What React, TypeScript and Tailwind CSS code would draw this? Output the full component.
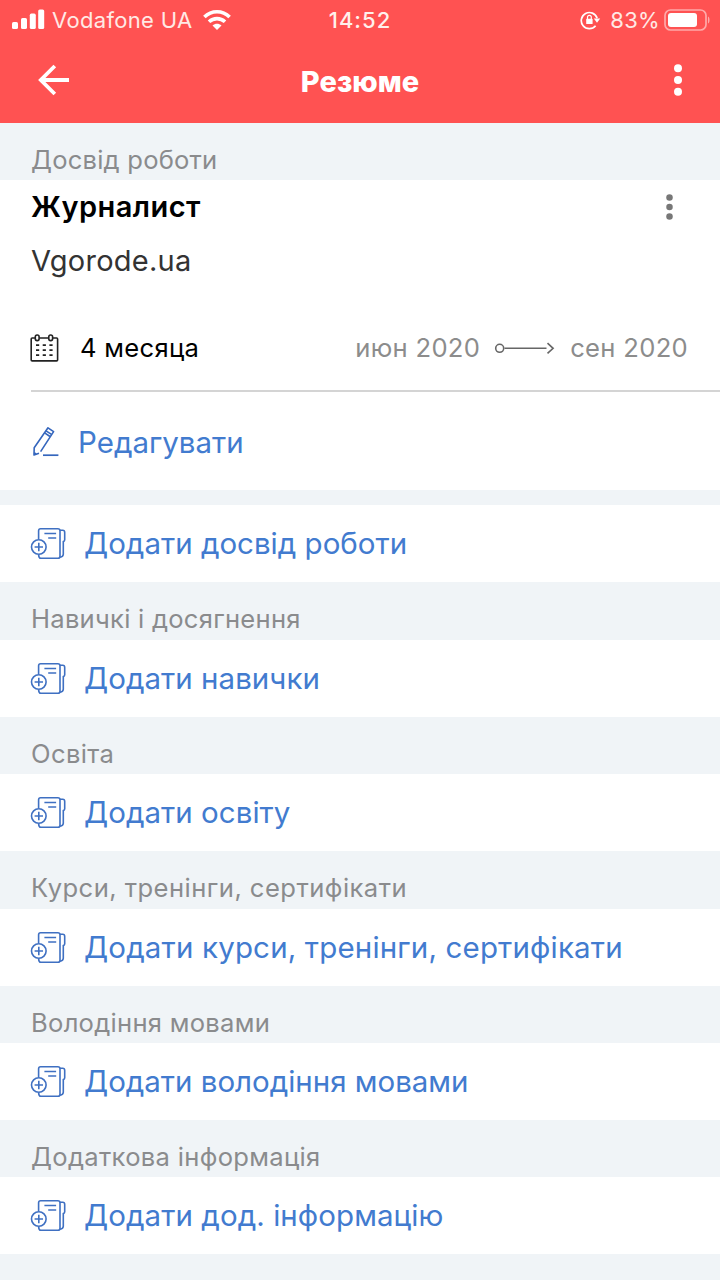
import { clsx } from "clsx";

const sections = [
  { title: "Навичкі і досягнення", action: "Додати навички", titleStyle: "tracking-[0.25px]", actionStyle: "tracking-[0.03px]" },
  { title: "Освіта", action: "Додати освіту", titleStyle: "tracking-[0.35px]", actionStyle: "tracking-[0.03px]" },
  { title: "Курси, тренінги, сертифікати", action: "Додати курси, тренінги, сертифікати", titleStyle: "tracking-[0.45px]", actionStyle: "tracking-[0.16px]" },
  { title: "Володіння мовами", action: "Додати володіння мовами", titleStyle: "tracking-[0.27px]", actionStyle: "tracking-[-0.02px]" },
  { title: "Додаткова інформація", action: "Додати дод. інформацію", titleStyle: "tracking-[0.3px]", actionStyle: "tracking-[0.06px]" },
];

function SignalIcon() {
  return (
    <svg width="33" height="22" viewBox="0 0 33 22" fill="#fff">
      <rect x="0" y="13" width="6" height="7" rx="1.6" />
      <rect x="9" y="9" width="6" height="11" rx="1.6" />
      <rect x="17.8" y="4.6" width="6" height="15.4" rx="1.6" />
      <rect x="26.2" y="0.5" width="6" height="19.5" rx="1.6" />
    </svg>
  );
}

function WifiIcon() {
  return (
    <svg width="28" height="22" viewBox="0 0 28 22" fill="none" stroke="#fff" strokeWidth="3.6">
      <path d="M1.4 8.1C8.5 0.9 19.5 0.9 26.6 8.1" />
      <path d="M6 12.8c4.6-4.3 11.4-4.3 16 0" />
      <path d="M9.5 16.5c2.7-2.3 6.3-2.3 9 0L14 21z" fill="#fff" stroke="none" />
    </svg>
  );
}

function RotationLockIcon() {
  return (
    <svg width="21" height="20" viewBox="0 0 21 20" fill="none" stroke="#fff" strokeWidth="1.7">
      <path d="M15.6 15.8A8.1 8.1 0 1 1 17.1 8.2" />
      <path d="M13.8 8.5h6.4L17 12.8z" fill="#fff" stroke="none" />
      <rect x="6.2" y="8.8" width="6.4" height="5.2" rx="0.6" fill="#fff" stroke="none" />
      <path d="M7.5 9V7.2a1.9 1.9 0 0 1 3.8 0V9" strokeWidth="1.2" />
    </svg>
  );
}

function BatteryIcon() {
  return (
    <svg width="46" height="22" viewBox="0 0 46 22">
      <rect x="1" y="1" width="41" height="20" rx="5.5" fill="none" stroke="#fff" strokeOpacity="0.5" strokeWidth="1.7" />
      <rect x="4" y="4" width="29" height="14" rx="3" fill="#fff" />
      <path d="M44 7.5c2 .8 2 6.2 0 7z" fill="#fff" fillOpacity="0.5" />
    </svg>
  );
}

function BackIcon() {
  return (
    <svg width="32" height="32" viewBox="0 0 32 32" fill="none" stroke="#fff" strokeWidth="3.8">
      <path d="M31 16H3M16.8 2L2.8 16l14 14" />
    </svg>
  );
}

function DotsIcon({ className }: { className?: string }) {
  return (
    <svg viewBox="0 0 8 32" fill="currentColor" className={className}>
      <circle cx="4" cy="4.2" r="4" />
      <circle cx="4" cy="16" r="4" />
      <circle cx="4" cy="27.8" r="4" />
    </svg>
  );
}

function CalendarIcon() {
  return (
    <svg width="29" height="29" viewBox="0 0 29 29" fill="none" stroke="#222" strokeWidth="1.6">
      <path d="M5 4H2.2Q1.2 4 1.2 5v20.9q0 1 1 1h24.4q1 0 1-1V5q0-1-1-1H23M9.3 4h9.2" />
      <rect x="5.3" y="1" width="3.8" height="5.6" rx="1.8" />
      <rect x="18.8" y="1" width="3.8" height="5.6" rx="1.8" />
      <path d="M6 11.2h17M6 16.2h17M6 21.2h17" strokeWidth="1.8" strokeDasharray="3.2 3.5" />
    </svg>
  );
}

function PeriodArrow() {
  return (
    <svg width="62" height="14" viewBox="0 0 62 14" fill="none" stroke="#666" strokeWidth="1.6">
      <circle cx="5.7" cy="7.3" r="4" />
      <path d="M10.5 7.3h42M53.5 2.2l5.6 5.1-5.6 5.1" />
    </svg>
  );
}

function PencilIcon() {
  return (
    <svg width="28" height="32" viewBox="0 0 28 32" fill="none" stroke="#3566bd" strokeWidth="1.6" strokeLinejoin="round">
      <path d="M7 27.2L2 29l.2-7.2L16 1.8l5.6 3.8L8.6 25.6" />
      <path d="M14 4.8l5.5 3.6M12.6 6.9l5.4 3.6M2.2 26.6l1.8 1.6" />
      <path d="M11 29.2h15.4" strokeWidth="1.7" />
    </svg>
  );
}

function AddDocIcon() {
  return (
    <svg width="36" height="33" viewBox="0 0 36 33" fill="none" stroke="#3f70c2" strokeWidth="1.6">
      <path d="M8.6 12V3.8Q8.6 1.7 10.6 1.7h17.2q2.2 0 2.2 2.1v25.4q0 2.1-2.2 2.1H10.8Q8.8 31.3 8.6 27.6" />
      <path d="M30 3.3h2.8q1.9 0 1.9 2.2v7.3q0 1.4-1.4 1.8v12.6q0 2.3-3.3 3" />
      <path d="M14.4 6.5h11.7M18.2 11h8" />
      <circle cx="8.8" cy="20" r="7.3" fill="#fff" />
      <path d="M4.6 20H13M8.8 15.8v8.4" />
    </svg>
  );
}

function SectionTitle({ children, className }: { children: string; className?: string }) {
  return (
    <div className="flex h-[57.4px] shrink-0 items-end pb-[4.5px] pl-[31px]">
      <h2 className={clsx("whitespace-nowrap text-[25.6px] leading-[32px] text-[#8a8b8d]", className)}>{children}</h2>
    </div>
  );
}

function AddRow({ children, className }: { children: string; className?: string }) {
  return (
    <button className="flex h-[77px] w-full shrink-0 items-center bg-white pl-[30px] text-left">
      <AddDocIcon />
      <span className={clsx("-mt-px ml-[18px] whitespace-nowrap text-[29.5px] leading-[36px] text-[#427bcf]", className)}>{children}</span>
    </button>
  );
}

export default function App() {
  return (
    <main className="flex h-[1280px] w-[720px] flex-col overflow-hidden bg-[#f0f4f7] font-['Inter',sans-serif]">
      <header className="h-[123px] shrink-0 bg-[#ff5252] text-white">
        <div className="grid h-[40px] grid-cols-3 items-center">
          <div className="flex items-center pl-3">
            <SignalIcon />
            <span className="ml-[7px] mr-[10px] whitespace-nowrap text-[22px] leading-7 tracking-[0.33px] text-[#ffe9e5]">Vodafone UA</span>
            <WifiIcon />
          </div>
          <span className="text-center text-[22px] font-medium leading-7 tracking-[1px] text-[#fff0ec]">14:52</span>
          <div className="flex items-center justify-end pr-[10px]">
            <RotationLockIcon />
            <span className="ml-[9px] mr-[4px] text-[22px] leading-7 tracking-[0.3px] text-[#ffe9e5]">83%</span>
            <BatteryIcon />
          </div>
        </div>
        <div className="grid h-[80px] grid-cols-[1fr_auto_1fr] items-center px-[38px]">
          <BackIcon />
          <h1 className="pt-[3px] text-[29px] font-extrabold leading-9">Резюме</h1>
          <DotsIcon className="h-8 w-2 justify-self-end" />
        </div>
      </header>

      <SectionTitle className="tracking-[0.2px]">Досвід роботи</SectionTitle>
      <section className="h-[309.6px] shrink-0 bg-white pl-[31px]">
        <div className="flex h-[54px] items-center justify-between pr-[47px]">
          <h3 className="text-[29px] font-semibold leading-9 tracking-[0.45px] text-black">Журналист</h3>
          <DotsIcon className="h-[26px] w-[7px] text-[#777]" />
        </div>
        <p className="flex h-[54px] items-center text-[29px] leading-9 tracking-[0.25px] text-[#333]">Vgorode.ua</p>
        <div className="flex h-[104px] items-center border-b-2 border-[#d4d4d4] pr-8 pt-[18px]">
          <span className="-ml-px"><CalendarIcon /></span>
          <span className="ml-[21px] text-[25.6px] leading-8 tracking-[0.3px] text-black">4 месяца</span>
          <div className="ml-auto flex items-center text-[25.6px] leading-8 tracking-[0.3px] text-[#8c8c8c]">
            <span>июн 2020</span>
            <span className="mx-[14px]"><PeriodArrow /></span>
            <span>сен 2020</span>
          </div>
        </div>
        <button className="flex h-[97px] w-full items-center pl-px pt-[3px] text-left">
          <PencilIcon />
          <span className="ml-[18px] text-[29.5px] leading-9 text-[#427bcf]">Редагувати</span>
        </button>
      </section>

      <div className="h-[15.5px] shrink-0" />
      <AddRow className="tracking-[0px]">Додати досвід роботи</AddRow>

      {sections.map((section) => (
        <section key={section.title} className="shrink-0">
          <SectionTitle className={section.titleStyle}>{section.title}</SectionTitle>
          <AddRow className={section.actionStyle}>{section.action}</AddRow>
        </section>
      ))}
    </main>
  );
}
